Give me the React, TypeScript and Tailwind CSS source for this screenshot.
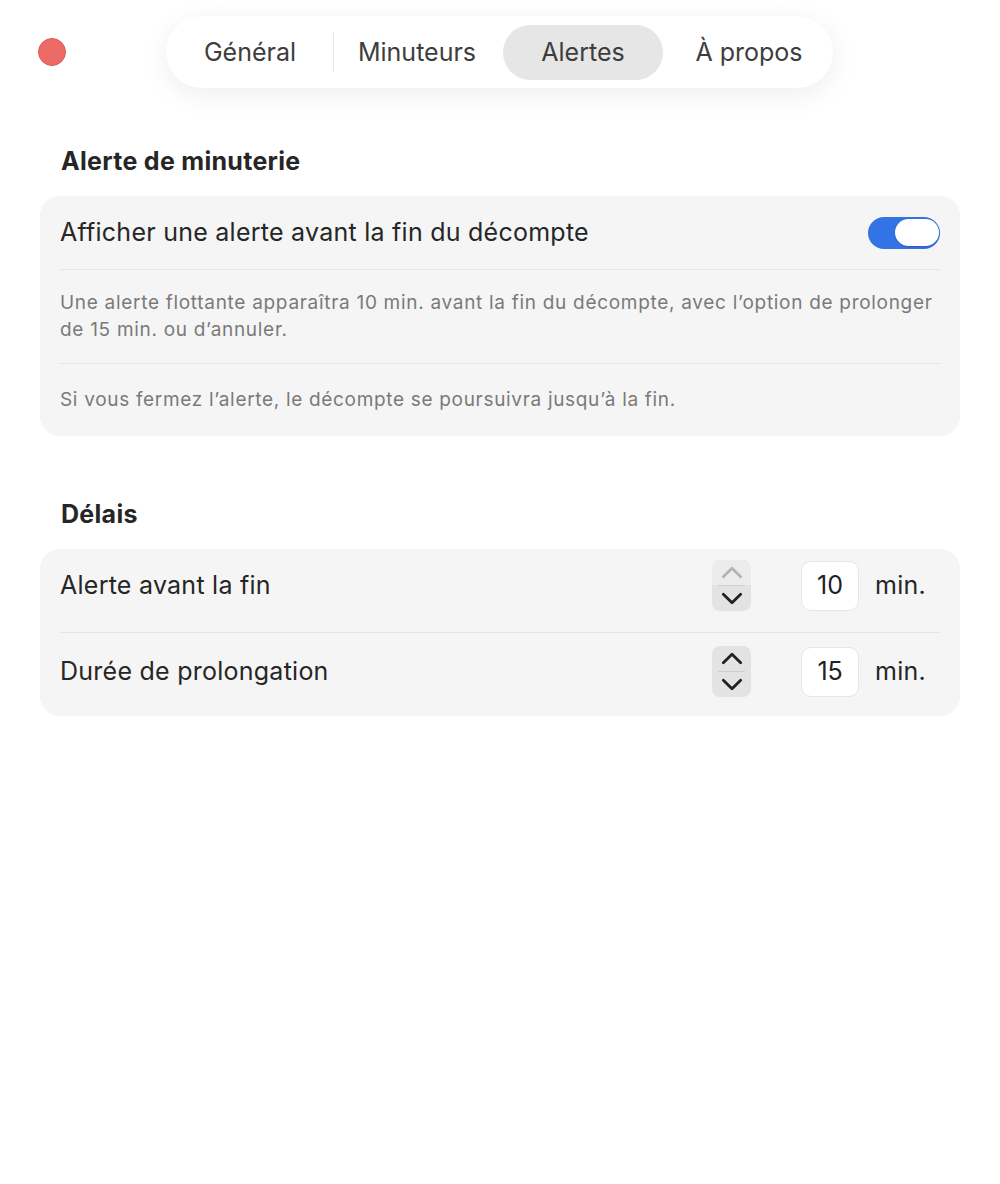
import { useState } from "react";

const tabs = ["Général", "Minuteurs", "Alertes", "À propos"];

function Chevron({ dir, className }: { dir: "up" | "down"; className: string }) {
  return (
    <svg viewBox="0 0 20 12" className={className} fill="none">
      <path
        d={dir === "up" ? "M2 10 L10 2 L18 10" : "M2 2 L10 10 L18 2"}
        stroke="currentColor"
        strokeWidth="2.6"
        strokeLinecap="round"
        strokeLinejoin="round"
      />
    </svg>
  );
}

function Stepper({ upDisabled }: { upDisabled?: boolean }) {
  return (
    <div className="flex flex-col w-[39px] h-[51px] rounded-[8px] overflow-hidden bg-[#e3e3e3]">
      <div
        className={
          upDisabled
            ? "flex flex-1 items-center justify-center bg-[#ececec] text-[#b3b3b3]"
            : "flex flex-1 items-center justify-center text-[#222]"
        }
      >
        <Chevron dir="up" className="w-[22px] h-[13px]" />
      </div>
      <div className="h-px mx-[6px] bg-[#cfcfcf]" />
      <div className="flex flex-1 items-center justify-center text-[#222]">
        <Chevron dir="down" className="w-[22px] h-[13px]" />
      </div>
    </div>
  );
}

function DelayRow({
  label,
  value,
  upDisabled,
  className,
}: {
  label: string;
  value: string;
  upDisabled?: boolean;
  className: string;
}) {
  return (
    <div className={"flex items-center " + className}>
      <span className="flex-1 text-[25px] tracking-[0.25px] text-[#262626]">{label}</span>
      <Stepper upDisabled={upDisabled} />
      <div className="flex items-center justify-center ml-[50px] w-[58px] h-[50px] rounded-[10px] bg-white border border-[#e6e6e6] text-[25px] text-[#222]">
        {value}
      </div>
      <span className="ml-[16px] mr-[14px] text-[25px] tracking-[0.25px] text-[#262626]">min.</span>
    </div>
  );
}

function App() {
  const [active, setActive] = useState("Alertes");
  const [enabled, setEnabled] = useState(true);

  return (
    <div className="min-h-[1184px] w-full bg-white font-['Inter',sans-serif]">
      {/* header */}
      <div className="flex items-center pt-4 pl-[38px]">
        <div className="w-[28px] h-[28px] rounded-full bg-[#ec6a66] border border-[#dd5c58]" />
        <div className="flex items-center ml-[100px] h-[72px] px-[4px] rounded-full bg-white shadow-[0_6px_28px_rgba(0,0,0,0.07)]">
          {tabs.map((t, i) => (
            <div key={t} className="flex items-center">
              {i === 1 && <div className="w-px h-[40px] mx-[3px] bg-[#e6e6e6]" />}
              {i > 1 && <div className="w-[6px]" />}
              <button
                onClick={() => setActive(t)}
                className={
                  active === t
                    ? "w-[160px] h-[55px] pt-[2px] rounded-full bg-[#e6e6e6] text-[25px] text-[#3d3d3d]"
                    : "w-[160px] h-[55px] pt-[2px] rounded-full text-[25px] text-[#3d3d3d]"
                }
              >
                {t}
              </button>
            </div>
          ))}
        </div>
      </div>

      <div className="px-[40px]">
        <h2 className="mt-[58px] pl-[21px] text-[25px] leading-[30px] tracking-[0.3px] font-bold text-[#262626]">
          Alerte de minuterie
        </h2>
        <div className="mt-[20px] rounded-[20px] bg-[#f5f5f5] px-[20px]">
          <div className="flex items-center h-[73px]">
            <span className="flex-1 text-[25px] tracking-[0.25px] text-[#262626]">
              Afficher une alerte avant la fin du décompte
            </span>
            <button
              onClick={() => setEnabled(!enabled)}
              className={
                enabled
                  ? "flex items-center justify-end w-[72px] h-[32px] px-[1px] rounded-full bg-[#3274e6]"
                  : "flex items-center justify-start w-[72px] h-[32px] px-[1px] rounded-full bg-[#dcdcdc]"
              }
            >
              <span className="w-[44px] h-[27px] rounded-full bg-white shadow-[0_1px_2px_rgba(0,0,0,0.2)]" />
            </button>
          </div>
          <div className="h-px bg-[#e4e4e4]" />
          <p className="pt-[19px] pb-[20px] text-[19px] leading-[27px] tracking-[0.7px] text-[#7a7a7a]">
            Une alerte flottante apparaîtra 10 min. avant la fin du décompte, avec l’option de prolonger de 15 min. ou d’annuler.
          </p>
          <div className="h-px bg-[#e4e4e4]" />
          <div className="flex items-center h-[72px] text-[19px] tracking-[0.68px] text-[#7a7a7a]">
            Si vous fermez l’alerte, le décompte se poursuivra jusqu’à la fin.
          </div>
        </div>

        <h2 className="mt-[63px] pl-[21px] text-[25px] leading-[30px] tracking-[0.3px] font-bold text-[#262626]">
          Délais
        </h2>
        <div className="mt-[20px] rounded-[20px] bg-[#f5f5f5] px-[20px]">
          <DelayRow label="Alerte avant la fin" value="10" upDisabled className="pt-[11px] pb-[21px]" />
          <div className="h-px bg-[#e4e4e4]" />
          <DelayRow label="Durée de prolongation" value="15" className="pt-[13px] pb-[19px]" />
        </div>
      </div>
    </div>
  );
}

export default App;
